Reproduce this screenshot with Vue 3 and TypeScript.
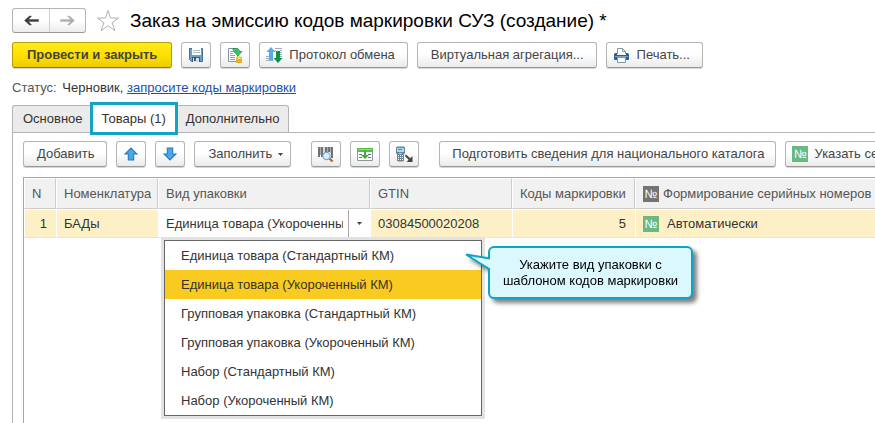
<script setup lang="ts">
import { ref } from 'vue'

const tabs = ['Основное', 'Товары (1)', 'Дополнительно']
const activeTab = ref('Товары (1)')

const packages = [
  'Единица товара (Стандартный КМ)',
  'Единица товара (Укороченный КМ)',
  'Групповая упаковка (Стандартный КМ)',
  'Групповая упаковка (Укороченный КМ)',
  'Набор (Стандартный КМ)',
  'Набор (Укороченный КМ)',
]
const selected = ref(packages[1])
const listOpen = ref(true)

function choose(name: string) {
  selected.value = name
  listOpen.value = false
}
</script>

<template>
  <main class="page">
    <header class="title-row">
      <div class="history">
        <button type="button" aria-label="Назад">
          <svg width="15" height="11" viewBox="0 0 15 11"><path d="M0.500 5.500 5.500 1H7.500L4.500 4.500H14.500v2H4.500L7.500 10H5.500z" fill="#3c3c3c" stroke="#3c3c3c" stroke-width=".4" /></svg>
        </button>
        <button type="button" aria-label="Вперед">
          <svg width="15" height="11" viewBox="0 0 15 11"><path d="M14.500 5.500 9.500 1H7.500L10.500 4.500H0.500v2H10.500L7.500 10H9.500z" fill="#adadad" stroke="#adadad" stroke-width=".4" /></svg>
        </button>
      </div>
      <button type="button" class="star" aria-label="В избранное">
        <svg width="24" height="23" viewBox="0 0 24 23"><path d="M12 1.500 14.500 9H22.500L16.100 13.600 18.900 21.700 12 16.600 5.100 21.700 7.900 13.600 1.500 9H9.500Z" fill="#fff" stroke="#b0b0b0" /></svg>
      </button>
      <h1>Заказ на эмиссию кодов маркировки СУЗ (создание) *</h1>
    </header>

    <div class="commands">
      <button type="button" class="btn primary">Провести и закрыть</button>
      <button type="button" class="btn icon" aria-label="Записать">
        <svg width="16" height="16" viewBox="0 0 16 16">
          <path d="M1.500 1.500h13v13H3.500l-2-2z" fill="#6f9fcb" stroke="#3f6f9e" />
          <path d="M4 1h9v7H4z" fill="#fff" />
          <path d="M5 3.500h7M5 5.500h7" stroke="#a9c0d4" />
          <path d="M4 10h8v5H4z" fill="#46586c" />
          <path d="M5 11h6v4H5z" fill="#d6e1eb" />
          <path d="M6 11h2v3H6z" fill="#46586c" />
        </svg>
      </button>
      <button type="button" class="btn icon" aria-label="Провести">
        <svg width="16" height="17" viewBox="0 0 16 17">
          <path d="M1.500 1.500h9v13h-9z" fill="#fff" stroke="#7c96a6" />
          <path d="M3 4.500h4M3 6.500h3M3 8.500h5M3 10.500h5M3 12.500h5" stroke="#8ca4b2" />
          <path d="M6 1.500h3.500q3 0 3 3H15L10.900 9 6.800 4.500h2.700V4Q9 3.200 6 3.200z" fill="#35c967" stroke="#159447" stroke-width=".7" />
          <path d="M9 11v4.500q3 1.500 6 0V11z" fill="#f1c92d" />
          <ellipse cx="12" cy="11" rx="3" ry="1.200" fill="#ffe77b" stroke="#d6a522" stroke-width=".6" />
          <path d="M9 13q3 1.400 6 0M9 15q3 1.400 6 0" fill="none" stroke="#c8971b" stroke-width=".8" />
        </svg>
      </button>
      <button type="button" class="btn with-icon">
        <svg width="17" height="16" viewBox="0 0 17 16">
          <path d="M9 1.500h7M9 3.500h1M14 3.500h2M14 5.500h2M0 9.500h3M0 11.500h3M0 13.500h7M14 7.500h2M14 9.500h2" stroke="#9bb0bd" />
          <path d="M5 0 9.500 5H7v8H3V5H.5z" fill="#58a9f2" />
          <path d="M12 16 7.500 11H10V4h4v7h2.500z" fill="#0c9347" />
        </svg>
        Протокол обмена
      </button>
      <button type="button" class="btn">Виртуальная агрегация...</button>
      <button type="button" class="btn with-icon print">
        <svg width="15" height="15" viewBox="0 0 15 15">
          <path d="M3.500 6V.5h5l3 3V6" fill="#fff" stroke="#7d99a5" />
          <path d="M8.500.5v3h3" fill="none" stroke="#7d99a5" />
          <path d="M0 6.500Q0 5 1.500 5H3v2h9V5h1.500Q15 5 15 6.500V11q0 1-1 1H1q-1 0-1-1z" fill="#2c6091" />
          <path d="M1 8h13v1H1z" fill="#79a3c7" />
          <path d="M3.500 9.500h8v5h-8z" fill="#fff" stroke="#7d99a5" />
        </svg>
        Печать...
      </button>
    </div>

    <p class="status"><span>Статус:</span> <span class="state">Черновик, <a href="#codes">запросите коды маркировки</a></span></p>

    <nav class="tabs" role="tablist">
      <button
        v-for="tab in tabs"
        :key="tab"
        type="button"
        role="tab"
        class="tab"
        :class="{ active: tab === activeTab }"
        :aria-selected="tab === activeTab"
        @click="activeTab = tab"
      >{{ tab }}</button>
    </nav>

    <section class="panel">
      <div class="commands goods-commands">
        <button type="button" class="btn">Добавить</button>
        <button type="button" class="btn icon" aria-label="Переместить вверх">
          <svg width="14" height="14" viewBox="0 0 13 13"><path d="M6.500 1 12 6.500H9V12H4V6.500H1z" fill="#46a8ee" stroke="#2c78b3" /></svg>
        </button>
        <button type="button" class="btn icon" aria-label="Переместить вниз">
          <svg width="14" height="14" viewBox="0 0 13 13"><path d="M6.500 12 12 6.500H9V1H4v5.500H1z" fill="#46a8ee" stroke="#2c78b3" /></svg>
        </button>
        <button type="button" class="btn fill">Заполнить
          <svg width="5" height="3" viewBox="0 0 5 3"><path d="M0 0h5L2.500 3z" fill="#444" /></svg>
        </button>
        <div class="group">
          <button type="button" class="btn icon" aria-label="Поиск по штрихкоду">
            <svg width="16" height="17" viewBox="0 0 16 17">
              <path d="M1 1v10M4 1v10M8 1v6M11 1v5M14 1v11" stroke="#444" stroke-width="1.500" />
              <path d="M2.500 1v8M6 1v7M9.500 1v6M12.500 1v6" stroke="#888" stroke-width=".7" />
              <path d="m11 12 3.500 3.500" stroke="#a66c38" stroke-width="2.400" />
              <circle cx="8.500" cy="10" r="3.600" fill="#d7efff" stroke="#79a7cf" stroke-width="1.200" />
            </svg>
          </button>
          <button type="button" class="btn icon" aria-label="Загрузить таблицу">
            <svg width="16" height="15" viewBox="0 0 16 15">
              <path d="M.5 1.500h15v12H.5z" fill="#fff" stroke="#8b989d" />
              <path d="M0 1h16v4H0z" fill="#5abd4a" />
              <path d="M1 2h14v1H1z" fill="#8fda79" />
              <path d="M2 7.500h3M2 10.500h3M11 7.500h3M11 10.500h3" stroke="#65767c" />
              <path d="M7 4h2v4h3l-4 4-4-4h3z" fill="#41ad35" />
            </svg>
          </button>
          <button type="button" class="btn icon" aria-label="Терминал сбора данных">
            <svg width="17" height="17" viewBox="0 0 17 17">
              <path d="M1 .5h7l1 1V7L8 8.500V15q-3.500 1-7 0V8.500L0 7V1.500z" fill="#6d8495" />
              <path d="M1 2h7v4H1z" fill="#a5daff" />
              <path d="M2 3.500h4" stroke="#4389bf" />
              <path d="M2 9.500h5M2 11.500h5M2 13.500h5" stroke="#fff" stroke-dasharray="1 1" />
              <path d="M3 7.500h3" stroke="#f1c644" />
              <path d="m10 8.500 4.200 3.800L16.500 10V16h-6l2.200-2.200L8.800 10z" fill="#454545" />
            </svg>
          </button>
        </div>
        <div class="group catalog">
          <button type="button" class="btn">Подготовить сведения для национального каталога</button>
          <button type="button" class="btn serial"><span class="num">№</span>Указать серийные номера</button>
        </div>
      </div>

      <div class="grid">
        <table>
          <colgroup>
            <col class="c-n"><col class="c-item"><col class="c-pack"><col class="c-gtin"><col class="c-codes"><col>
          </colgroup>
          <thead>
            <tr>
              <th scope="col">N</th>
              <th scope="col">Номенклатура</th>
              <th id="pack-label" scope="col">Вид упаковки</th>
              <th scope="col">GTIN</th>
              <th scope="col">Коды маркировки</th>
              <th scope="col"><span class="num gray">№</span>Формирование серийных номеров</th>
            </tr>
          </thead>
          <tbody>
            <tr>
              <td class="right">1</td>
              <td>БАДы</td>
              <td class="edit">
                <div class="combo">
                  <input v-model="selected" type="text" role="combobox" aria-labelledby="pack-label" aria-controls="pack-list" :aria-expanded="listOpen">
                  <button type="button" aria-label="Показать список" @click="listOpen = !listOpen">
                    <svg width="5" height="3" viewBox="0 0 5 3"><path d="M0 0h5L2.500 3z" fill="#444" /></svg>
                  </button>
                </div>
                <div v-if="listOpen" class="popup">
                  <ul id="pack-list" role="listbox" aria-labelledby="pack-label">
                    <li
                      v-for="name in packages"
                      :key="name"
                      role="option"
                      :aria-selected="name === selected"
                      :class="{ current: name === selected }"
                      @click="choose(name)"
                    >{{ name }}</li>
                  </ul>
                  <aside class="callout">
                    <svg class="tail" width="28" height="20" viewBox="0 0 28 20">
                      <path d="M28 6 25.500 5.500 2 1.500 25.500 16.500 28 17z" fill="#dbf8ff" />
                      <path d="M26 5.500 2 1.500 26 16.500" fill="none" stroke="#0da5c4" stroke-width="2" />
                    </svg>
                    Укажите вид упаковки с<br>шаблоном кодов маркировки
                  </aside>
                </div>
              </td>
              <td>03084500020208</td>
              <td class="right">5</td>
              <td><span class="num">№</span>Автоматически</td>
            </tr>
          </tbody>
        </table>
      </div>
    </section>
  </main>
</template>

<style>
body {
  margin: 0;
  background: #fff;
}
</style>

<style scoped>
* {
  box-sizing: border-box;
}

.page {
  display: flex;
  flex-direction: column;
  min-height: 100vh;
  padding: 8px 0 0 12px;
  overflow: hidden;
  color: #333;
  font: 13px/16px "Liberation Sans", Arial, sans-serif;
}

button,
input {
  font: inherit;
  color: inherit;
}

svg {
  display: block;
  flex: none;
}

.title-row {
  display: flex;
  align-items: center;
  height: 25px;
}

.history {
  display: flex;
  border: 1px solid #b4b4b4;
  border-bottom-color: #999;
  border-radius: 3px;
  background: linear-gradient(#fff 50%, #ececec);
}

.history button {
  display: grid;
  place-items: center;
  width: 36px;
  height: 23px;
  padding: 0;
  border: 0;
  background: none;
}

.history button + button {
  border-left: 1px solid #d0d0d0;
}

.star {
  margin: 0 10px;
  padding: 0;
  border: 0;
  background: none;
}

h1 {
  margin: 0;
  color: #000;
  font-size: 19px;
  font-weight: 400;
  line-height: 24px;
  white-space: nowrap;
}

.commands {
  display: flex;
  gap: 9px;
  margin-top: 9px;
}

.group {
  display: flex;
  gap: 9px;
  margin-left: 11px;
}

.btn {
  display: flex;
  flex: none;
  align-items: center;
  justify-content: center;
  height: 26px;
  padding: 0 12px 0 13px;
  border: 1px solid #b4b4b4;
  border-bottom-color: #989898;
  border-radius: 3px;
  background: linear-gradient(#fff 45%, #eaeaea);
  box-shadow: 0 1px 0 #d6d6d6;
  color: #444;
  white-space: nowrap;
}

.primary {
  padding: 0 14px;
  border-color: #b89f00;
  border-bottom-color: #927e00;
  background: linear-gradient(#ffea1c, #ffe000 50%, #eccc00);
  color: #444;
  font-weight: 700;
}

.icon {
  width: 30px;
  padding: 0;
}

.with-icon {
  gap: 6px;
  padding: 0 12px 0 6px;
}

.print {
  gap: 8px;
  padding-left: 7px;
}

.fill {
  gap: 6px;
  padding-right: 7px;
}

.catalog .btn {
  padding: 0 11px 0 12px;
}

.catalog .serial {
  gap: 6px;
  padding-left: 6px;
}

.status {
  margin: 12px 0 9px;
  color: #555;
}

.state {
  margin-left: 2px;
  color: #333;
}

.status a {
  color: #1a4fb0;
}

.tabs {
  display: flex;
  position: relative;
  height: 27px;
}

.tab {
  padding: 0 9px 0 10px;
  border: 1px solid #b4b4b4;
  border-width: 1px 0 0 1px;
  background: #ebebeb;
}

.tab:first-child {
  border-top-left-radius: 3px;
}

.tab:last-child {
  border-right-width: 1px;
  border-left-width: 0;
  border-top-right-radius: 3px;
}

.tab.active {
  margin: -3px -2px;
  padding: 0 9px;
  border: 3px solid #14a4c2;
  background: #fff;
  z-index: 1;
}

.panel {
  display: flex;
  flex: 1;
  flex-direction: column;
  padding-left: 10px;
  border: 1px solid #b4b4b4;
  border-width: 1px 0 0 1px;
}

.goods-commands {
  margin-top: 8px;
}

.num {
  display: inline-block;
  width: 16px;
  height: 16px;
  background: #69b984;
  color: #fff;
  font-size: 12px;
  line-height: 16px;
  text-align: center;
}

th .num {
  margin-right: 4px;
}

td .num {
  margin-right: 8px;
}

.num.gray {
  background: #737373;
}

.grid {
  flex: 1;
  margin-top: 10px;
  border: 1px solid #a6a6a6;
  border-width: 1px 0 0 1px;
}

table {
  width: 100%;
  table-layout: fixed;
  border-collapse: separate;
  border-spacing: 0;
}

.c-n {
  width: 32px;
}

.c-item {
  width: 102px;
}

.c-pack {
  width: 212px;
}

.c-gtin {
  width: 142px;
}

.c-codes {
  width: 123px;
}

th {
  height: 31px;
  padding: 0 7px;
  border: 1px solid #fff;
  border-right-color: #ccc;
  border-bottom-color: #ccc;
  background: #f1f1f1;
  color: #555;
  font-weight: 400;
  text-align: left;
  white-space: nowrap;
}

td {
  height: 29px;
  padding: 0 7px;
  border: 1px solid #fff;
  border-bottom-color: #e4e4e4;
  border-right-width: 0;
  background: #fdf0c6;
  white-space: nowrap;
}

.right {
  padding-right: 9px;
  text-align: right;
}

th:last-child,
td:last-child {
  padding-right: 0;
  border-right: 0;
}

.edit {
  position: relative;
  padding: 0;
  background: #fff;
}

.combo {
  display: flex;
  height: 27px;
}

.combo input {
  flex: 1;
  min-width: 0;
  margin: 0 5px 0 7px;
  padding: 0;
  border: 0;
  outline: 0;
  background: none;
}

.combo button {
  display: grid;
  place-items: center;
  width: 22px;
  padding: 0;
  border: 0;
  border-left: 1px solid #a6a6a6;
  background: none;
}

.popup {
  position: absolute;
  top: 30px;
  left: 5px;
  z-index: 2;
}

ul {
  width: 318px;
  margin: 0;
  padding: 0;
  border: 1px solid #666;
  background: #fff;
  box-shadow: 0 0 0 3px #e2e2e2;
  list-style: none;
}

li {
  padding: 0 16px;
  line-height: 29px;
}

.current {
  background: #f9ca20;
}

.callout {
  position: absolute;
  top: 6px;
  left: 324px;
  width: 205px;
  padding: 9px 0 8px;
  border: 2px solid #0da5c4;
  border-radius: 6px;
  background: #dbf8ff;
  color: #000;
  text-align: center;
  filter: drop-shadow(4px 4px 2px rgb(0 0 0 / 50%));
}

.tail {
  position: absolute;
  top: 5px;
  left: -26px;
}
</style>
